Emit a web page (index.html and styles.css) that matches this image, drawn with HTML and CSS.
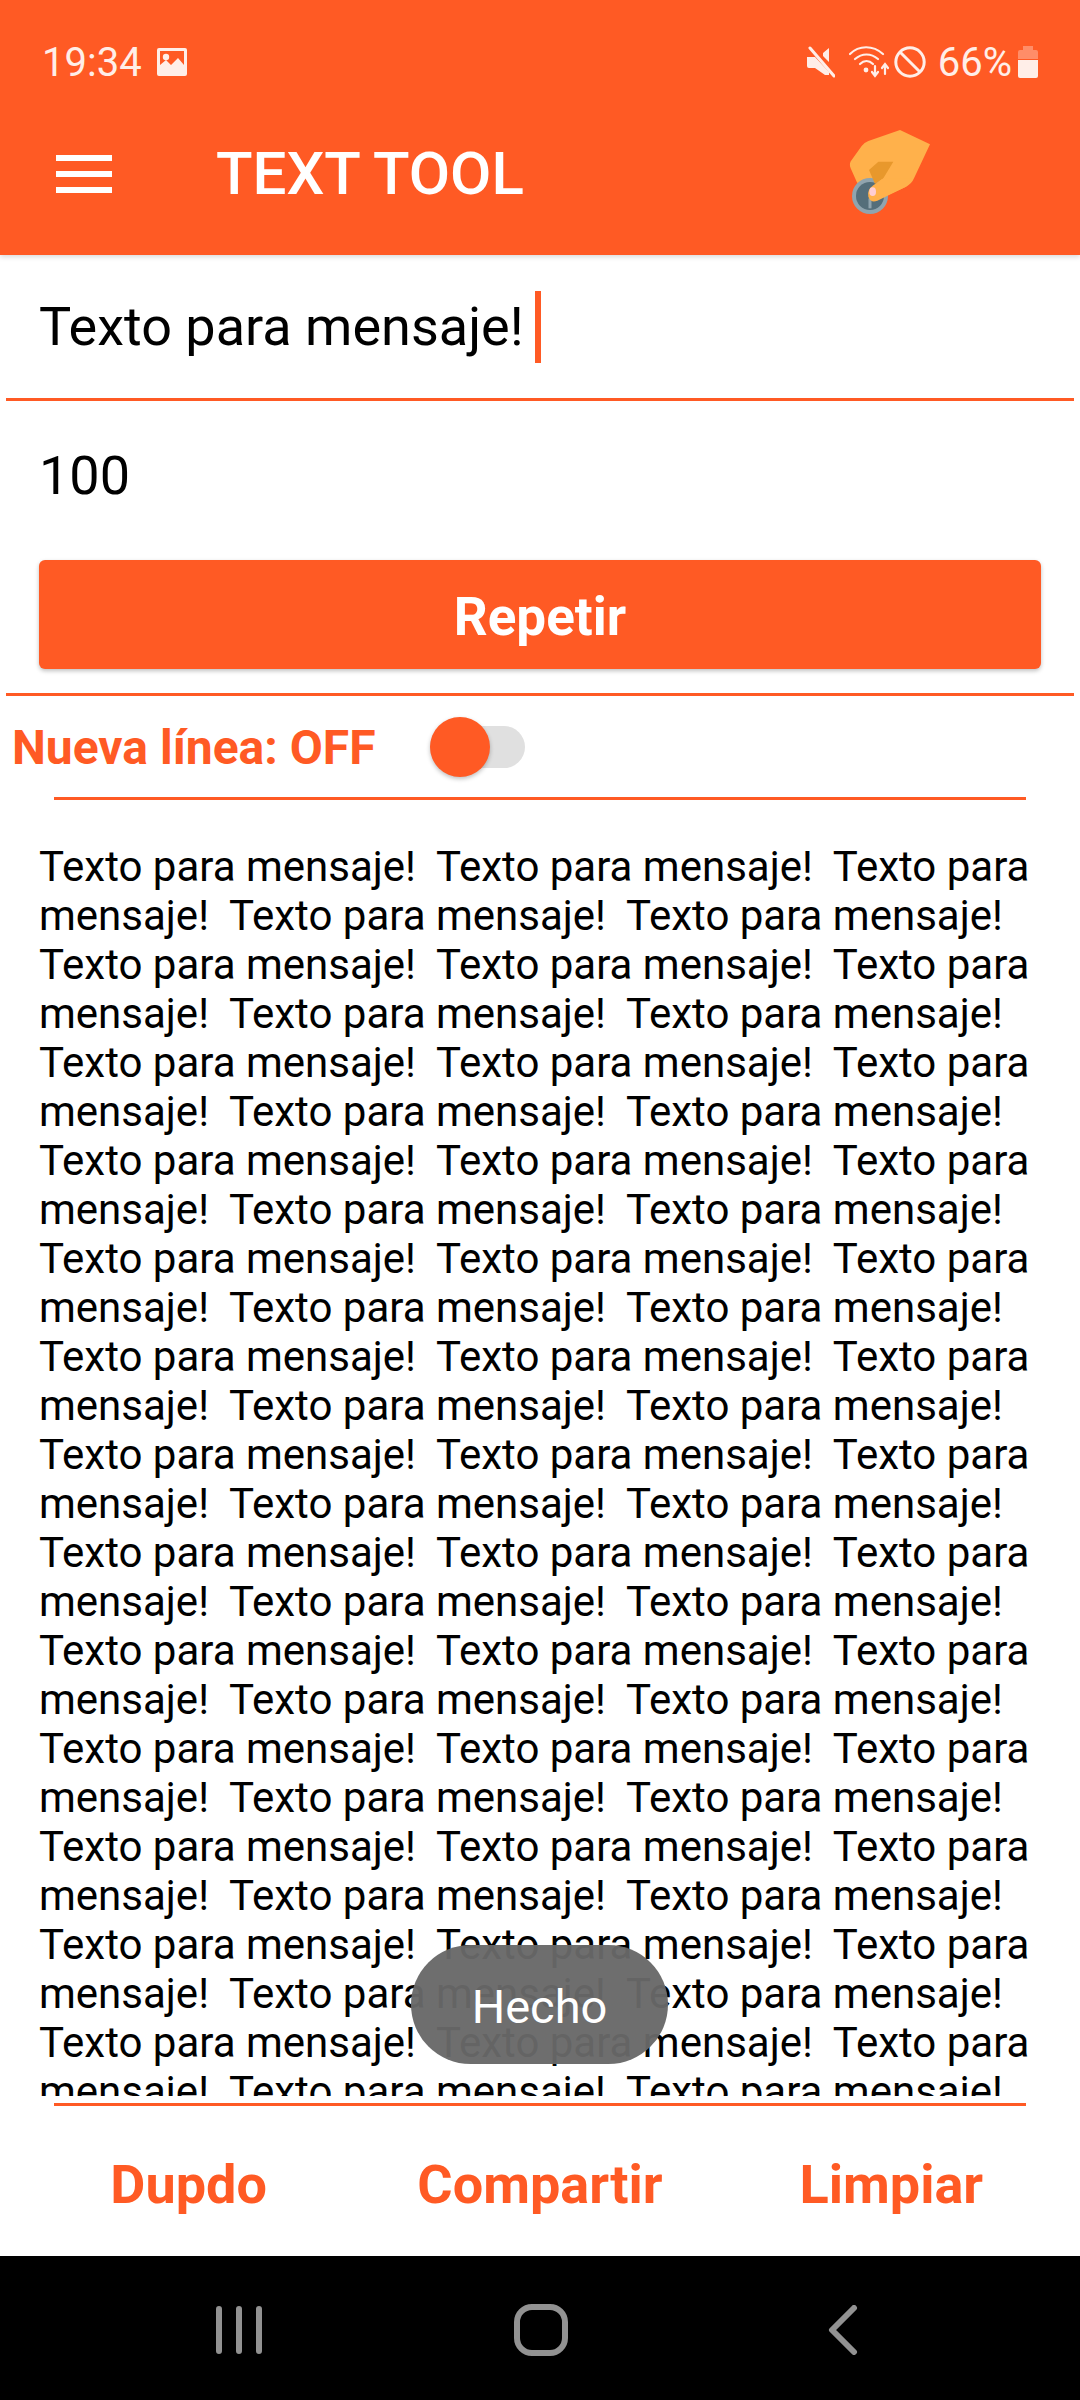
FILE: index.html
```html
<!DOCTYPE html>
<html lang="es">
  <head>
    <meta charset="UTF-8" />
    <meta name="viewport" content="width=device-width, initial-scale=1.0" />
    <title>Text Tool</title>
    <link rel="stylesheet" href="styles.css">
  </head>
  <body>
    <div class="app">
      <header class="app-header">
        <div class="status-bar">
          <div class="status-left">
            <span class="status-time">19:34</span>
            <svg class="icon-picture" viewBox="0 0 30 28">
              <path fill="#ffeee8" fill-rule="evenodd" d="M2 0h26a2 2 0 0 1 2 2v24a2 2 0 0 1-2 2H2a2 2 0 0 1-2-2V2a2 2 0 0 1 2-2zM3 3v14l6-5 5 5 7-7 6 7V3z" />
              <circle cx="9" cy="9" r="3.2" fill="#ffeee8" />
            </svg>
          </div>
          <div class="status-right">
            <svg class="icon-mute" viewBox="0 0 28 32">
              <path fill="#ffeee8" d="M0 11h6l2 0 14 15v3l-4 0-10-7H2a2 2 0 0 1-2-2zM16 7l6-5v14l-6-6z" />
              <path stroke="#ffeee8" stroke-width="3" stroke-linecap="round" d="M3 2l24 28" />
            </svg>
            <svg class="icon-wifi" viewBox="0 0 41 32">
              <g fill="none" stroke="#ffeee8" stroke-width="2.2" stroke-linecap="round">
                <path d="M1 8C10 -1 24 -1 34 8" />
                <path d="M6 13C13 7 22 7 29 13" />
                <path d="M11 18C15 14 20 14 24 18" />
                <path d="M26 20v9M23 26l3 4 3-4M36 28v-9M33 22l3-4 3 4" />
              </g>
              <circle cx="17" cy="24" r="2.4" fill="#ffeee8" />
            </svg>
            <svg class="icon-block" viewBox="0 0 32 32">
              <circle cx="16" cy="16" r="14.2" fill="none" stroke="#ffeee8" stroke-width="3" />
              <path stroke="#ffeee8" stroke-width="3" d="M6 6l20 20" />
            </svg>
            <span class="status-battery-text">66%</span>
            <svg class="icon-battery" viewBox="0 0 20 32">
              <path fill="#ffeee8" opacity="0.35" d="M5 0h10v4h3a2 2 0 0 1 2 2v7H0V6a2 2 0 0 1 2-2h3z" />
              <path fill="#ffeee8" d="M0 14h20v16a2 2 0 0 1-2 2H2a2 2 0 0 1-2-2z" />
            </svg>
          </div>
        </div>
        <div class="toolbar">
          <div class="menu-icon"><span></span><span></span><span></span></div>
          <h1 class="toolbar-title">TEXT TOOL</h1>
          <svg class="toolbar-logo" viewBox="0 0 360 360">
            <path fill="#ffb14b" d="M240 60L330 103L282 205Q275 222 258 230L150 280L110 215L92 175Q86 160 95 150L125 108Q132 98 145 93z" />
            <circle cx="150" cy="258" r="54" fill="#90a4ae" />
            <circle cx="150" cy="258" r="42" fill="#546e7a" />
            <path stroke="#90a4ae" stroke-width="9" d="M150 265v30" />
            <path fill="#e8982c" d="M175 155H220L190 205L165 222L147 180z" />
            <path fill="#ffb14b" d="M190 205L275 205Q270 222 258 230L172 272Q152 280 145 260Q140 240 160 226z" />
            <ellipse cx="158" cy="245" rx="10" ry="13" fill="#ffcdd2" />
          </svg>
        </div>
      </header>

      <main class="content">
        <div class="text-input">Texto para mensaje!<span class="caret"></span></div>
        <hr class="rule rule-wide" />
        <div class="count-input">100</div>
        <button class="btn-repeat">Repetir</button>
        <hr class="rule rule-wide" />
        <div class="newline-row">
          <span class="newline-label">Nueva línea: OFF</span>
          <div class="switch"><div class="switch-thumb"></div></div>
        </div>
        <hr class="rule rule-inset" />
        <div class="output">Texto para mensaje!  Texto para mensaje!  Texto para mensaje!  Texto para mensaje!  Texto para mensaje!  Texto para mensaje!  Texto para mensaje!  Texto para mensaje!  Texto para mensaje!  Texto para mensaje!  Texto para mensaje!  Texto para mensaje!  Texto para mensaje!  Texto para mensaje!  Texto para mensaje!  Texto para mensaje!  Texto para mensaje!  Texto para mensaje!  Texto para mensaje!  Texto para mensaje!  Texto para mensaje!  Texto para mensaje!  Texto para mensaje!  Texto para mensaje!  Texto para mensaje!  Texto para mensaje!  Texto para mensaje!  Texto para mensaje!  Texto para mensaje!  Texto para mensaje!  Texto para mensaje!  Texto para mensaje!  Texto para mensaje!  Texto para mensaje!  Texto para mensaje!  Texto para mensaje!  Texto para mensaje!  Texto para mensaje!  Texto para mensaje!  Texto para mensaje!  Texto para mensaje!  Texto para mensaje!  Texto para mensaje!  Texto para mensaje!  Texto para mensaje!  Texto para mensaje!  Texto para mensaje!  Texto para mensaje!  Texto para mensaje!  Texto para mensaje!  Texto para mensaje!  Texto para mensaje!  Texto para mensaje!  Texto para mensaje!  Texto para mensaje!  Texto para mensaje!  Texto para mensaje!  Texto para mensaje!  Texto para mensaje!  Texto para mensaje!  Texto para mensaje!  Texto para mensaje!  Texto para mensaje!  Texto para mensaje!  Texto para mensaje!  Texto para mensaje!  </div>
        <hr class="rule rule-inset" />
        <div class="actions">
          <button class="btn-action">Dupdo</button>
          <button class="btn-action">Compartir</button>
          <button class="btn-action">Limpiar</button>
        </div>
      </main>

      <nav class="nav-bar">
        <svg class="nav-recent" viewBox="0 0 46 48">
          <path stroke="#929292" stroke-width="6" stroke-linecap="round" d="M3 3v42M23 3v42M43 3v42" />
        </svg>
        <svg class="nav-home" viewBox="0 0 54 52">
          <rect x="3" y="3" width="48" height="46" rx="15" fill="none" stroke="#929292" stroke-width="6" />
        </svg>
        <svg class="nav-back" viewBox="0 0 30 50">
          <path fill="none" stroke="#929292" stroke-width="6" stroke-linecap="round" stroke-linejoin="round" d="M26 3L4 25L26 47" />
        </svg>
      </nav>

      <div class="toast">Hecho</div>
    </div>
  </body>
</html>
```

FILE: styles.css
```css
* {
  margin: 0;
  padding: 0;
  box-sizing: border-box;
}

body {
  font-family: Roboto, "Liberation Sans", sans-serif;
  background: white;
}

.app {
  position: relative;
  width: 1080px;
  height: 2400px;
  display: flex;
  flex-direction: column;
  overflow: hidden;
}

.app-header {
  height: 255px;
  background: #ff5a24;
  box-shadow: 0 2px 5px rgba(0, 0, 0, 0.15);
  z-index: 1;
}

.status-bar {
  height: 92px;
  padding: 46px 42px 0 42px;
  display: flex;
  justify-content: space-between;
  align-items: flex-start;
  color: #ffeee8;
}

.status-left,
.status-right {
  display: flex;
  align-items: center;
  height: 32px;
}

.status-time {
  font-size: 40px;
  line-height: 32px;
  padding-top: 2px;
  margin-right: 15px;
}

.icon-picture {
  width: 30px;
  height: 28px;
}

.icon-mute {
  width: 28px;
  height: 32px;
  margin-right: 14px;
}

.icon-wifi {
  width: 41px;
  height: 32px;
  margin-right: 4px;
}

.icon-block {
  width: 32px;
  height: 32px;
  margin-right: 12px;
}

.status-battery-text {
  font-size: 40px;
  line-height: 32px;
  padding-top: 2px;
  margin-right: 6px;
}

.icon-battery {
  width: 20px;
  height: 32px;
}

.toolbar {
  height: 163px;
  position: relative;
  display: flex;
  align-items: center;
  padding-left: 56px;
}

.menu-icon {
  width: 56px;
  display: flex;
  flex-direction: column;
  gap: 10px;
  margin-right: 104px;
}

.menu-icon span {
  display: block;
  height: 6px;
  background: white;
}

.toolbar-title {
  color: white;
  font-size: 60px;
  font-weight: 500;
}

.toolbar-logo {
  position: absolute;
  left: 820px;
  top: 18px;
  width: 120px;
  height: 120px;
}

.content {
  flex: 1;
  display: flex;
  flex-direction: column;
}

.text-input {
  height: 143px;
  padding-left: 39px;
  display: flex;
  align-items: center;
  font-size: 54px;
  color: #000;
}

.caret {
  width: 6px;
  height: 72px;
  margin-left: 11px;
  background: #ff5a24;
}

.rule {
  border: none;
  height: 3px;
  flex-shrink: 0;
  background: #ff5a24;
}

.rule-wide {
  margin: 0 6px;
}

.rule-inset {
  margin: 0 54px;
}

.count-input {
  height: 159px;
  padding: 43px 0 0 39px;
  font-size: 54px;
  line-height: 64px;
  color: #000;
}

.btn-repeat {
  height: 109px;
  margin: 0 39px 24px 39px;
  padding-top: 5px;
  border: none;
  border-radius: 6px;
  background: #ff5a24;
  color: white;
  font-family: inherit;
  font-size: 53px;
  font-weight: 700;
  flex-shrink: 0;
  box-shadow: 0 2px 4px rgba(0, 0, 0, 0.25);
}

.newline-row {
  height: 101px;
  padding-left: 12px;
  display: flex;
  align-items: center;
}

.newline-label {
  width: 418px;
  padding-top: 2px;
  color: #ff5a24;
  font-size: 48px;
  font-weight: 700;
}

.switch {
  position: relative;
  width: 95px;
  height: 42px;
  border-radius: 21px;
  background: #e0e0e0;
}

.switch-thumb {
  position: absolute;
  left: 0;
  top: -9px;
  width: 60px;
  height: 60px;
  border-radius: 50%;
  background: #ff5a24;
  box-shadow: 0 2px 4px rgba(0, 0, 0, 0.25);
}

.output {
  height: 1254px;
  margin-top: 42px;
  margin-bottom: 7px;
  padding: 0 39px;
  overflow: hidden;
  font-size: 42px;
  line-height: 49px;
  white-space: pre-wrap;
  color: #000;
}

.actions {
  flex: 1;
  padding: 7px 13px 0;
  display: grid;
  grid-template-columns: repeat(3, 1fr);
  align-items: center;
}

.btn-action {
  border: none;
  background: none;
  color: #ff5a24;
  font-family: inherit;
  font-size: 54px;
  font-weight: 700;
}

.nav-bar {
  height: 144px;
  flex-shrink: 0;
  background: #000;
  padding: 48px 0 0 216px;
  display: flex;
  align-items: flex-start;
}

.nav-recent {
  width: 46px;
  height: 48px;
  margin-top: 2px;
  margin-right: 252px;
}

.nav-home {
  width: 54px;
  height: 52px;
  margin-right: 260px;
}

.nav-back {
  width: 30px;
  height: 50px;
  margin-top: 1px;
}

.toast {
  position: absolute;
  left: 411px;
  top: 1945px;
  width: 257px;
  height: 119px;
  padding-top: 3px;
  border-radius: 60px;
  background: rgba(104, 104, 104, 0.96);
  color: white;
  font-size: 47px;
  display: flex;
  align-items: center;
  justify-content: center;
}
```
